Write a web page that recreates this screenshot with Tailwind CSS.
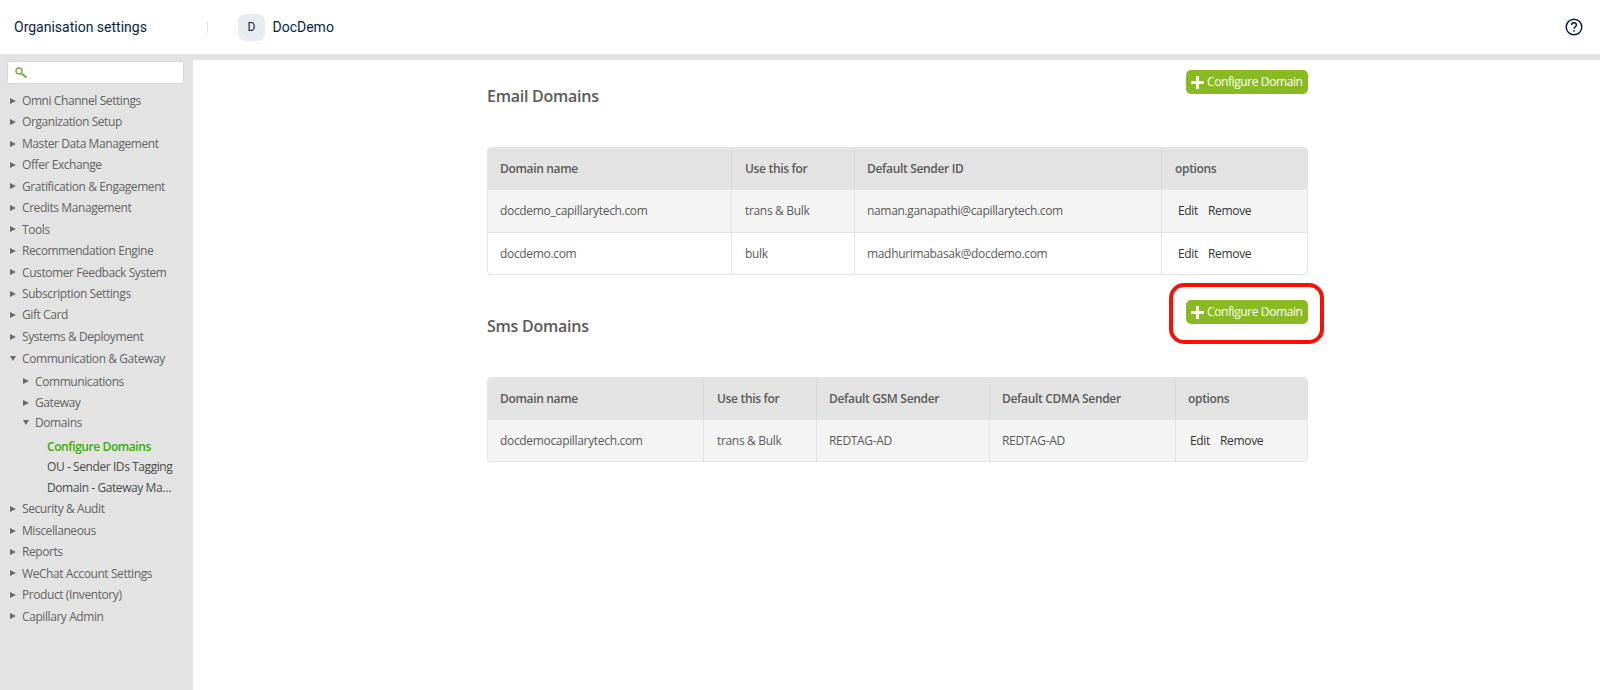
<!DOCTYPE html>
<html lang="en">
<head>
    <meta charset="UTF-8">
    <title>Organisation settings</title>
    <script src="https://cdn.jsdelivr.net/npm/@tailwindcss/browser@4"></script>
</head>
<body class="bg-white font-['Open_Sans',sans-serif] text-[#5a5a5a] overflow-hidden">

    <!-- Top bar -->
    <header class="h-[54px] flex items-center bg-white text-[#091e42] font-['Roboto',sans-serif]">
        <div class="w-[207px] pl-[14px] text-[14px]">Organisation settings</div>
        <div class="w-px h-[11px] bg-[#dfe2e7]"></div>
        <div class="ml-[30px] w-[27px] h-[27px] rounded-lg bg-[#e9ebf2] flex items-center justify-center text-[12px]">D</div>
        <div class="ml-[7.5px] text-[14px]">DocDemo</div>
        <svg class="ml-auto mr-[17px]" width="18" height="18" viewBox="0 0 18 18" fill="none" stroke="#091e42">
            <circle cx="9" cy="9" r="7.8" stroke-width="1.5"/>
            <path d="M6.6 7.1c0-1.4 1-2.3 2.4-2.3s2.4.9 2.4 2.2c0 1.9-2.4 1.9-2.4 3.8" stroke-width="1.4"/>
            <path d="M9 12.2v1.5" stroke-width="1.5"/>
        </svg>
    </header>
    <div class="h-[6px] bg-[#e3e3e3]"></div>

    <div class="flex h-[630px]">
        <!-- Sidebar -->
        <aside class="w-[193px] shrink-0 bg-[#e3e3e3] pl-[7px] pt-px text-[12px] tracking-[-0.42px] text-[#636363]">
            <div class="w-[177px] h-[23px] bg-white border border-[#d8d8d8] rounded-[2px] flex items-center pl-[6px]">
                <svg width="14" height="14" viewBox="0 0 14 14" fill="none" stroke="#7cab4a">
                    <circle cx="5" cy="5" r="3" stroke-width="1.4"/>
                    <path d="M7.5 7.5L12.5 11.5" stroke-width="2.2"/>
                </svg>
            </div>
            <ul class="mt-[6px] leading-[21.45px] whitespace-nowrap">
                <li class="flex items-center h-[21.45px]"><span class="ml-[3px] mr-[6px] border-y-[3.5px] border-l-[6px] border-y-transparent border-l-[#6a6a6a]"></span>Omni Channel Settings</li>
                <li class="flex items-center h-[21.45px]"><span class="ml-[3px] mr-[6px] border-y-[3.5px] border-l-[6px] border-y-transparent border-l-[#6a6a6a]"></span>Organization Setup</li>
                <li class="flex items-center h-[21.45px]"><span class="ml-[3px] mr-[6px] border-y-[3.5px] border-l-[6px] border-y-transparent border-l-[#6a6a6a]"></span>Master Data Management</li>
                <li class="flex items-center h-[21.45px]"><span class="ml-[3px] mr-[6px] border-y-[3.5px] border-l-[6px] border-y-transparent border-l-[#6a6a6a]"></span>Offer Exchange</li>
                <li class="flex items-center h-[21.45px]"><span class="ml-[3px] mr-[6px] border-y-[3.5px] border-l-[6px] border-y-transparent border-l-[#6a6a6a]"></span>Gratification &amp; Engagement</li>
                <li class="flex items-center h-[21.45px]"><span class="ml-[3px] mr-[6px] border-y-[3.5px] border-l-[6px] border-y-transparent border-l-[#6a6a6a]"></span>Credits Management</li>
                <li class="flex items-center h-[21.45px]"><span class="ml-[3px] mr-[6px] border-y-[3.5px] border-l-[6px] border-y-transparent border-l-[#6a6a6a]"></span>Tools</li>
                <li class="flex items-center h-[21.45px]"><span class="ml-[3px] mr-[6px] border-y-[3.5px] border-l-[6px] border-y-transparent border-l-[#6a6a6a]"></span>Recommendation Engine</li>
                <li class="flex items-center h-[21.45px]"><span class="ml-[3px] mr-[6px] border-y-[3.5px] border-l-[6px] border-y-transparent border-l-[#6a6a6a]"></span>Customer Feedback System</li>
                <li class="flex items-center h-[21.45px]"><span class="ml-[3px] mr-[6px] border-y-[3.5px] border-l-[6px] border-y-transparent border-l-[#6a6a6a]"></span>Subscription Settings</li>
                <li class="flex items-center h-[21.45px]"><span class="ml-[3px] mr-[6px] border-y-[3.5px] border-l-[6px] border-y-transparent border-l-[#6a6a6a]"></span>Gift Card</li>
                <li class="flex items-center h-[21.45px]"><span class="ml-[3px] mr-[6px] border-y-[3.5px] border-l-[6px] border-y-transparent border-l-[#6a6a6a]"></span>Systems &amp; Deployment</li>
                <li class="flex items-center h-[21.45px] mt-[1px]"><span class="ml-[3px] mr-[6px] border-x-[3px] border-t-[5px] border-x-transparent border-t-[#6a6a6a]"></span>Communication &amp; Gateway</li>
                <li class="flex items-center h-[21.45px] pl-[13px] mt-[1px]"><span class="ml-[3px] mr-[6px] border-y-[3.5px] border-l-[6px] border-y-transparent border-l-[#6a6a6a]"></span>Communications</li>
                <li class="flex items-center h-[21.45px] pl-[13px]"><span class="ml-[3px] mr-[6px] border-y-[3.5px] border-l-[6px] border-y-transparent border-l-[#6a6a6a]"></span>Gateway</li>
                <li class="flex items-center h-[21.45px] pl-[13px] mt-[-2px]"><span class="ml-[3px] mr-[6px] border-x-[3px] border-t-[5px] border-x-transparent border-t-[#6a6a6a]"></span>Domains</li>
                <li class="h-[20.45px] pl-[40px] mt-[3px] font-semibold text-[#33b000]">Configure Domains</li>
                <li class="h-[20.5px] pl-[40px] text-[#4a4a4a]">OU - Sender IDs Tagging</li>
                <li class="h-[21.45px] pl-[40px] text-[#4a4a4a]">Domain - Gateway Ma…</li>
                <li class="flex items-center h-[21.45px]"><span class="ml-[3px] mr-[6px] border-y-[3.5px] border-l-[6px] border-y-transparent border-l-[#6a6a6a]"></span>Security &amp; Audit</li>
                <li class="flex items-center h-[21.45px]"><span class="ml-[3px] mr-[6px] border-y-[3.5px] border-l-[6px] border-y-transparent border-l-[#6a6a6a]"></span>Miscellaneous</li>
                <li class="flex items-center h-[21.45px]"><span class="ml-[3px] mr-[6px] border-y-[3.5px] border-l-[6px] border-y-transparent border-l-[#6a6a6a]"></span>Reports</li>
                <li class="flex items-center h-[21.45px]"><span class="ml-[3px] mr-[6px] border-y-[3.5px] border-l-[6px] border-y-transparent border-l-[#6a6a6a]"></span>WeChat Account Settings</li>
                <li class="flex items-center h-[21.45px]"><span class="ml-[3px] mr-[6px] border-y-[3.5px] border-l-[6px] border-y-transparent border-l-[#6a6a6a]"></span>Product (Inventory)</li>
                <li class="flex items-center h-[21.45px]"><span class="ml-[3px] mr-[6px] border-y-[3.5px] border-l-[6px] border-y-transparent border-l-[#6a6a6a]"></span>Capillary Admin</li>
            </ul>
        </aside>

        <!-- Main content -->
        <main class="ml-[294px] w-[821px] pt-[10px]">
            <!-- Email Domains -->
            <section class="h-[230px]">
                <div class="h-[77px] flex justify-between items-start">
                    <h2 class="mt-[14px] text-[16px] font-semibold leading-[24px] tracking-[-0.25px]">Email Domains</h2>
                    <button class="h-[24px] w-[122px] bg-[#8aba22] rounded-[5px] text-white text-[12px] tracking-[-0.4px] whitespace-nowrap flex items-center pl-[5px] gap-[3px]">
                        <svg width="13" height="13" viewBox="0 0 13 13"><path d="M5 0h3v5h5v3H8v5H5V8H0V5h5z" fill="#fff"/></svg>
                        Configure Domain
                    </button>
                </div>
                <table class="w-[821px] table-fixed border-separate border-spacing-0 text-[12px] tracking-[-0.33px] border border-[#e3e3e3] rounded-[4px] overflow-hidden">
                    <thead class="bg-[#e3e3e3] font-semibold">
                        <tr class="h-[42px] text-left">
                            <th class="w-[243px] pl-[12px] font-semibold">Domain name</th>
                            <th class="w-[123px] pl-[13px] font-semibold border-l border-[#d8d8d8]">Use this for</th>
                            <th class="w-[307px] pl-[12px] font-semibold border-l border-[#d8d8d8]">Default Sender ID</th>
                            <th class="pl-[13px] font-semibold border-l border-[#d8d8d8]">options</th>
                        </tr>
                    </thead>
                    <tbody>
                        <tr class="h-[42px] bg-[#f4f4f4]">
                            <td class="pl-[12px]">docdemo_capillarytech.com</td>
                            <td class="pl-[13px] border-l border-[#e3e3e3]">trans &amp; Bulk</td>
                            <td class="pl-[12px] border-l border-[#e3e3e3]">naman.ganapathi@capillarytech.com</td>
                            <td class="pl-[16px] border-l border-[#e3e3e3] text-[#333]"><span class="mr-[10px]">Edit</span>Remove</td>
                        </tr>
                        <tr class="h-[42px]">
                            <td class="pl-[12px] border-t border-[#e3e3e3]">docdemo.com</td>
                            <td class="pl-[13px] border-t border-l border-[#e3e3e3]">bulk</td>
                            <td class="pl-[12px] border-t border-l border-[#e3e3e3]">madhurimabasak@docdemo.com</td>
                            <td class="pl-[16px] border-t border-l border-[#e3e3e3] text-[#333]"><span class="mr-[10px]">Edit</span>Remove</td>
                        </tr>
                    </tbody>
                </table>
            </section>

            <!-- Sms Domains -->
            <section>
                <div class="h-[77px] flex justify-between items-start">
                    <h2 class="mt-[14px] text-[16px] font-semibold leading-[24px] tracking-[-0.25px]">Sms Domains</h2>
                    <div class="relative">
                        <button class="h-[24px] w-[122px] bg-[#8aba22] rounded-[5px] text-white text-[12px] tracking-[-0.4px] whitespace-nowrap flex items-center pl-[5px] gap-[3px]">
                            <svg width="13" height="13" viewBox="0 0 13 13"><path d="M5 0h3v5h5v3H8v5H5V8H0V5h5z" fill="#fff"/></svg>
                            Configure Domain
                        </button>
                        <div class="absolute left-[-17px] top-[-17px] w-[155px] h-[61px] border-[4px] border-[#fb0f05] rounded-[15px]"></div>
                    </div>
                </div>
                <table class="w-[821px] table-fixed border-separate border-spacing-0 text-[12px] tracking-[-0.33px] border border-[#e3e3e3] rounded-[4px] overflow-hidden">
                    <thead class="bg-[#e3e3e3]">
                        <tr class="h-[42px] text-left">
                            <th class="w-[215px] pl-[12px] font-semibold">Domain name</th>
                            <th class="w-[113px] pl-[13px] font-semibold border-l border-[#d8d8d8]">Use this for</th>
                            <th class="w-[173px] pl-[12px] font-semibold border-l border-[#d8d8d8]">Default GSM Sender</th>
                            <th class="w-[186px] pl-[12px] font-semibold border-l border-[#d8d8d8]">Default CDMA Sender</th>
                            <th class="pl-[12px] font-semibold border-l border-[#d8d8d8]">options</th>
                        </tr>
                    </thead>
                    <tbody>
                        <tr class="h-[41px] bg-[#f4f4f4]">
                            <td class="pl-[12px]">docdemocapillarytech.com</td>
                            <td class="pl-[13px] border-l border-[#e3e3e3]">trans &amp; Bulk</td>
                            <td class="pl-[12px] border-l border-[#e3e3e3]">REDTAG-AD</td>
                            <td class="pl-[12px] border-l border-[#e3e3e3]">REDTAG-AD</td>
                            <td class="pl-[14px] border-l border-[#e3e3e3] text-[#333]"><span class="mr-[10px]">Edit</span>Remove</td>
                        </tr>
                    </tbody>
                </table>
            </section>
        </main>
    </div>

</body>
</html>
